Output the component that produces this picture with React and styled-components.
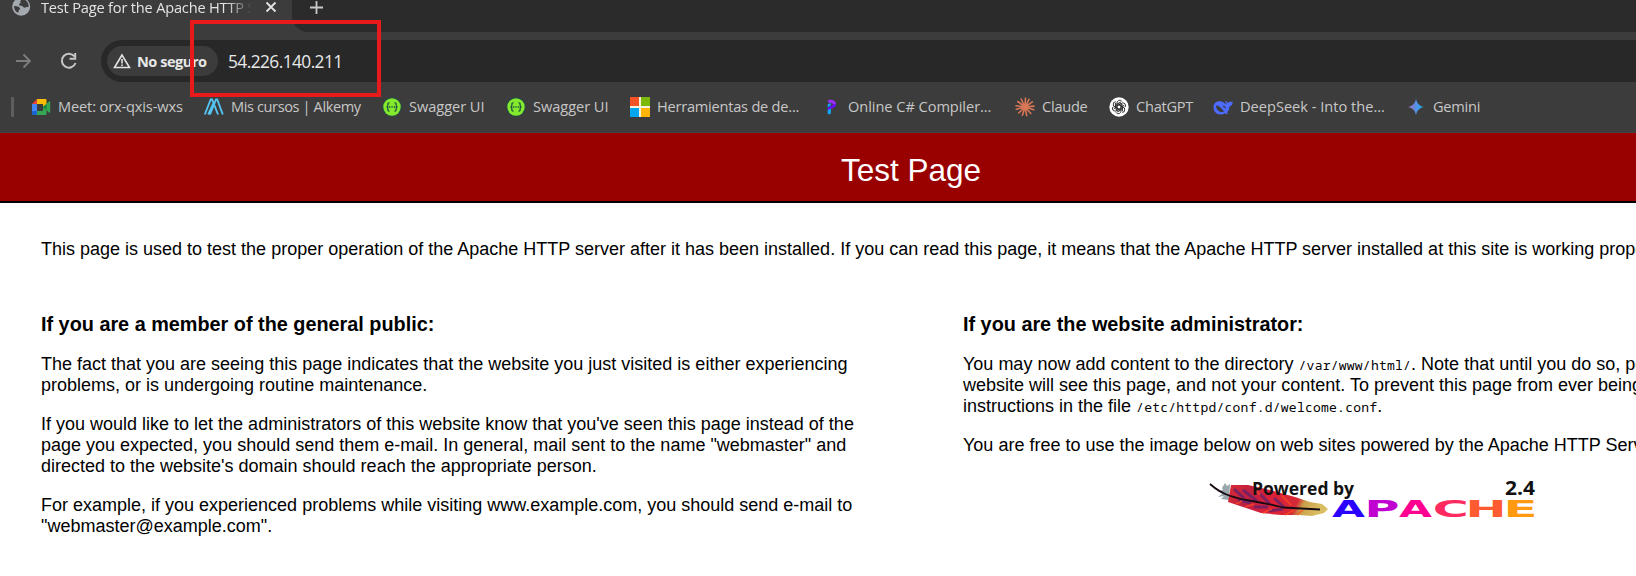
import React from "react";
import styled, { createGlobalStyle } from "styled-components";

const Global = createGlobalStyle`
  * { box-sizing: border-box; }
  html, body { margin: 0; height: 576px; overflow: hidden; background: #fff; }
`;

const Window = styled.div`
  position: relative;
  width: 1636px;
  height: 576px;
  overflow: hidden;
  display: flex;
  flex-direction: column;
  font-family: "Open Sans", "Noto Sans", sans-serif;
`;

const TabStrip = styled.div`
  flex: none;
  display: flex;
  height: 32px;
  background: #3c3c3c;
`;

const Tab = styled.div`
  width: 292px;
  height: 32px;
  padding: 0 13px 0 12px;
  display: flex;
  background: #3c3c3c;
  color: #e3e3e3;
`;

const TabIcon = styled.span`
  width: 29px;
  margin-top: -3px;
  svg { display: block; }
`;

const TabTitle = styled.span`
  width: 224px;
  overflow: hidden;
  white-space: nowrap;
  font-size: 14.6px;
  line-height: 20px;
  margin-top: -3px;
  letter-spacing: ${(p) => p.$spacing}px;
  -webkit-mask-image: linear-gradient(90deg, #000 186px, transparent 211px);
  mask-image: linear-gradient(90deg, #000 186px, transparent 211px);
`;

const TabRest = styled.div`
  flex: 1;
  height: 32px;
  padding-left: 18px;
  background: #2b2b2b;
  border-bottom-left-radius: 16px;
  svg { display: block; }
`;

const Toolbar = styled.div`
  flex: none;
  height: 50px;
  padding: 8px 0 0 14px;
  display: flex;
  background: #3c3c3c;
`;

const NavButton = styled.span`
  width: ${(p) => p.$w}px;
  height: 42px;
  display: flex;
  align-items: center;
`;

const AddressBar = styled.div`
  flex: 1;
  height: 42px;
  padding-left: 6px;
  display: flex;
  align-items: center;
  background: #282828;
  border-radius: 21px 0 0 21px;
`;

const SecurityChip = styled.span`
  width: 111px;
  height: 30px;
  padding-left: 6px;
  display: flex;
  align-items: center;
  gap: 6px;
  border-radius: 15px;
  background: #3c3c3c;
  color: #e8e8e8;
  font-weight: 700;
  font-size: 14.5px;
  white-space: nowrap;
  letter-spacing: -0.45px;
`;

const Url = styled.span`
  margin-left: 10px;
  color: #e8e8e8;
  font-size: 17.3px;
  letter-spacing: -0.55px;
`;

const BookmarkBar = styled.div`
  flex: none;
  height: 51px;
  display: flex;
  align-items: flex-start;
  padding: 15px 0 0 11px;
  background: #3c3c3c;
  border-bottom: 1px solid #444;
`;

const Divider = styled.span`
  width: 3px;
  height: 20px;
  margin-right: 17px;
  border-radius: 1px;
  background: #5e5e5e;
`;

const Bookmark = styled.span`
  flex: none;
  width: ${(p) => p.$w}px;
  height: 20px;
  display: flex;
  align-items: center;
  gap: 7px;
  color: #c7c7c7;
  font-size: 14.6px;
  line-height: 20px;
  letter-spacing: ${(p) => p.$spacing}px;
  white-space: nowrap;
  svg { flex: none; }
`;

const BookmarkLabel = styled.span`
  padding-bottom: 2px;
`;

const Banner = styled.header`
  flex: none;
  height: 70px;
  width: 1822px;
  background: #990000;
  border-bottom: 2px solid #000;
  text-align: center;
`;

const BannerTitle = styled.h1`
  margin: 0;
  padding-top: 19px;
  color: #fff;
  font: 400 31.5px/36px "Liberation Sans", Arial, sans-serif;
`;

const Content = styled.main`
  flex: none;
  width: 1822px;
  padding: 36px 0 0 41px;
  color: #000;
  font: 18px/21px "Liberation Sans", Arial, sans-serif;
`;

const Intro = styled.p`
  margin: 0;
  white-space: nowrap;
`;

const Columns = styled.div`
  display: flex;
  padding-top: 53px;
`;

const Column = styled.section`
  flex: none;
  width: ${(p) => p.$w}px;
`;

const ColumnTitle = styled.h2`
  margin: 0 0 18px;
  font-size: 19.83px;
  line-height: 23px;
  font-weight: 700;
`;

const Paragraph = styled.p`
  margin: 0 0 18px;
  white-space: nowrap;
`;

const Path = styled.code`
  font: 13px/18px "Noto Sans Mono", "DejaVu Sans Mono", monospace;
  letter-spacing: 0.24px;
`;

const Logo = styled.svg`
  display: block;
  margin: 0 0 0 227px;
`;

const Highlight = styled.div`
  position: absolute;
  left: 190px;
  top: 20px;
  width: 191px;
  height: 77px;
  border: 4px solid #e81a1c;
`;

const GlobeIcon = () => (
  <svg width="19" height="19" viewBox="0 0 19 19">
    <circle cx="9.2" cy="9.7" r="9" fill="#a4a9af" />
    <path d="M11.5 2.2c-2.2.3-3.8 1.4-3 3.2.4 1-1.2 1-1.5 2.2-.3 1 1.400 1.400 2.700 1.400 1.500 0 1.500 1.800 3 1.800 1.200 0 1.700-1 3.800-.6A7.300 7.300 0 0 0 11.500 2.200zM2 9c1.500-.3 5.500.3 6 2.300.3 1.400-1.600 1.300-1.400 3 .1 1-.7 1.600-1.700 1A7.500 7.500 0 0 1 2 9z" fill="#3c3c3c" />
  </svg>
);

const MeetIcon = () => (
  <svg width="20" height="20" viewBox="0 0 20 20">
    <path d="M1 7l5-5v5z" fill="#ea4335" />
    <path d="M6 2h8.500a1 1 0 0 1 1 1v4.500L12 10V7H6z" fill="#fbbc04" />
    <path d="M1 7h5v7H1z" fill="#4285f4" />
    <path d="M1 14h5v4H2.500A1.500 1.500 0 0 1 1 16.500z" fill="#1967d2" />
    <path d="M6 14h6v-4l3.500 2.500V17a1 1 0 0 1-1 1H6z" fill="#34a853" />
    <path d="M12 10l6-5.500c.6-.4 1.200-.2 1.200.5v10c0 .7-.6.900-1.200.5z" fill="#34a853" />
    <path d="M12 10l3.500-3v6z" fill="#188038" />
  </svg>
);

const AlkemyIcon = () => (
  <svg width="20" height="20" viewBox="0 0 20 20" fill="none" stroke="#55c3f0" strokeWidth="1.900">
    <path d="M.8 17.500L6.700 2.500h1.400L14 17.500M6 17.500L12 2.500h1.200l5.600 15M4.200 17.500L10 5" />
  </svg>
);

const SwaggerIcon = () => (
  <svg width="20" height="20" viewBox="0 0 20 20">
    <circle cx="10" cy="10" r="9.700" fill="#234b48" />
    <circle cx="10" cy="10" r="8.700" fill="#83ea2c" />
    <path d="M7.500 5.800C5.700 5.600 5.900 6.800 5.900 8c0 1.300-.4 1.900-1.300 2 .9.100 1.300.7 1.300 2 0 1.200-.2 2.400 1.600 2.200M12.500 5.800c1.800-.2 1.600 1 1.600 2.200 0 1.300.4 1.900 1.300 2-.9.100-1.300.7-1.300 2 0 1.200.2 2.400-1.600 2.200" fill="none" stroke="#205044" strokeWidth="1.300" />
    <path d="M7 10h1.300M9.400 10h1.300M11.800 10h1.300" stroke="#205044" strokeWidth="1.300" />
  </svg>
);

const MicrosoftIcon = () => (
  <svg width="20" height="20" viewBox="0 0 20 20">
    <path d="M0 0h20v20H0z" fill="#f4f1dc" />
    <path d="M0 0h9v9H0z" fill="#f35325" />
    <path d="M11 0h9v9h-9z" fill="#7cb90a" />
    <path d="M0 11h9v9H0z" fill="#05a6f0" />
    <path d="M11 11h9v9h-9z" fill="#ffb508" />
  </svg>
);

const CompilerIcon = () => (
  <svg width="20" height="20" viewBox="0 0 20 20">
    <path d="M6.700 7.200l3-1.200v2.500l-3 2z" fill="#12a5f4" />
    <path d="M6.700 12.200l3.200-1.800v5.500c0 .9-.7 1.400-1.600 1.400H6.700z" fill="#12a5f4" />
    <path d="M7.200 3c3.500-.6 7.800.6 7.800 4l-2.600 1c-.4-2-2.600-2.600-5.200-2.200z" fill="#9a2cff" />
    <path d="M15 7c0 3-2.600 4.300-5.100 4.600l-3.200 1.600v-2.100l5.700-3.600z" fill="#6a0cff" />
  </svg>
);

const ClaudeIcon = () => (
  <svg width="20" height="20" viewBox="0 0 20 20" stroke="#d97757" strokeWidth="1.600" strokeLinecap="round">
    <path d="M10 10L10.500 1M10 10l4-7.700M10 10l7.300-5.200M10 10l9-.9M10 10l8.700 2.800M10 10l5.800 6.500M10 10l1.700 8.700M10 10l-2.600 8.300M10 10l-6.300 6M10 10l-8.700 2.200M10 10L1 8.800M10 10L2.800 4.500M10 10L6.200 2" />
  </svg>
);

const ChatGptIcon = () => (
  <svg width="20" height="20" viewBox="0 0 20 20" fill="none" stroke="#202020" strokeWidth="0.900">
    <circle cx="10" cy="10" r="9.700" fill="#fff" stroke="none" />
    {[0, 60, 120, 180, 240, 300].map((a) => (
      <path key={a} transform={`rotate(${a} 10 10)`} d="M8 11.200V6.200c0-3.100 3.700-3.800 5-1.700M8 8.700l3.300-1.900 4 2.300" />
    ))}
  </svg>
);

const DeepSeekIcon = () => (
  <svg width="20" height="20" viewBox="0 0 20 20">
    <path d="M19.700 4.300c-1 .7-1.600.6-2.400.5-1.600-.1-2.100 1.100-2.800 1-.9-.4-.8-2-2.100-2.300.2 1.100-.2 1.800.6 2.800l1 1c-1.600-.2-3-1.800-4.800-2.600C4.700 3.400.5 5.500.5 10.300c0 4.200 3.100 7.200 7.200 7.200 1.700 0 3-.4 4.200-1.200 1 .6 2 .9 3.100.6.300-.3-.5-.7-1-1.200 1.400-1.500 2.500-3.600 2.500-6.100 1.800-.4 3.300-2.100 3.200-5.300z" fill="#4d6bfe" />
    <path d="M3 8.500c3.200-.2 5.600 3 8 6-3.300 1.700-8-.7-8-6zM9.500 9.200c1.500-1.200 3.500.3 3.400 2.700-1-.7-1.400-1.700-3.400-2.700z" fill="#3c3c3c" />
  </svg>
);

const GeminiIcon = () => (
  <svg width="20" height="20" viewBox="0 0 20 20">
    <defs>
      <linearGradient id="gem" x1="0" y1="0" x2="1" y2="0">
        <stop offset="0" stopColor="#a575b8" />
        <stop offset=".35" stopColor="#6f83d6" />
        <stop offset=".65" stopColor="#3e9ff0" />
        <stop offset="1" stopColor="#2696b8" />
      </linearGradient>
    </defs>
    <path d="M10 1.500c.7 4.900 3.500 7.800 8.500 8.500-5 .7-7.800 3.500-8.500 8.500-.7-5-3.500-7.800-8.500-8.500 5-.7 7.800-3.600 8.500-8.500z" fill="url(#gem)" />
  </svg>
);

const bookmarks = [
  [MeetIcon, "Meet: orx-qxis-wxs", 173, -0.14],
  [AlkemyIcon, "Mis cursos | Alkemy", 178, -0.4],
  [SwaggerIcon, "Swagger UI", 124, -0.05],
  [SwaggerIcon, "Swagger UI", 124, -0.05],
  [MicrosoftIcon, "Herramientas de de...", 191, -0.23],
  [CompilerIcon, "Online C# Compiler...", 194, -0.05],
  [ClaudeIcon, "Claude", 94, -0.25],
  [ChatGptIcon, "ChatGPT", 104, -0.25],
  [DeepSeekIcon, "DeepSeek - Into the...", 193, 0],
  [GeminiIcon, "Gemini", 90, -0.25],
];

const letters = [
  ["A", 142, 33, "#2a00ff"],
  ["P", 174.6, 35, "#c000d0"],
  ["A", 209, 33, "#ff0090"],
  ["C", 242.7, 36, "#ff2a60"],
  ["H", 275.5, 41, "#ff5a30"],
  ["E", 313.4, 34, "#ff9a10"],
];

const ApacheLogo = () => (
  <Logo width="350" height="56" viewBox="0 0 350 56">
    <defs>
      <linearGradient id="plume" x1="0" y1="0" x2="1" y2=".15">
        <stop offset="0" stopColor="#d92a32" />
        <stop offset=".25" stopColor="#c02042" />
        <stop offset=".5" stopColor="#dc2038" />
        <stop offset=".76" stopColor="#d52a36" />
        <stop offset=".83" stopColor="#c9a04a" />
        <stop offset="1" stopColor="#d9bd62" />
      </linearGradient>
    </defs>
    <path d="M32 14l3-5 2 3 3-2-1 16-8-1 3-3-6 1 5-4-6-2 6-1z" fill="#9aa7ae" />
    <path d="M41 11l17 0 22 5 25 7 15 5 12 2 6 5-4 4-12 3-13-1-18 0-20-2-18-6-15-5z" fill="url(#plume)" />
    <path d="M44 15l10 9M53 16l14 11M70 20l10 10M48 26l13 3M64 33l14 0M84 24l10 9M78 37l15-2" stroke="#61206c" strokeWidth="3" opacity=".75" />
    <path d="M64 14l6 7M92 22l9 9M46 30l6-3M55 33l9-3M73 39l9-4M95 41l9-5M107 41l6-5" stroke="#ff4a20" strokeWidth="1.500" opacity=".8" />
    <path d="M20 10q9 8 19 11.500T62 27t31 6.500l37 2" fill="none" stroke="#160b12" strokeWidth="1.800" />
    <text x="62" y="20.500" textLength="102" lengthAdjust="spacingAndGlyphs" fontFamily="Open Sans" fontWeight="700" fontSize="17.500" fill="#111">Powered by</text>
    <text x="315" y="20.500" textLength="30" lengthAdjust="spacingAndGlyphs" fontFamily="Open Sans" fontWeight="700" fontSize="19" fill="#111">2.4</text>
    {letters.map(([ch, x, w, fill]) => (
      <text key={x} x={x} y="42.500" textLength={w} lengthAdjust="spacingAndGlyphs" fontFamily="DejaVu Sans" fontWeight="700" fontSize="23" fill={fill}>{ch}</text>
    ))}
  </Logo>
);

export default function App() {
  return (
    <Window>
      <Global />
      <TabStrip>
        <Tab>
          <TabIcon><GlobeIcon /></TabIcon>
          <TabTitle $spacing={-0.19}>Test Page for the Apache HTTP Server</TabTitle>
          <svg width="13" height="16" viewBox="0 0 13 16" stroke="#e3e3e3" strokeWidth="1.800">
            <path d="M1.500 2.500l9 9M10.500 2.500l-9 9" />
          </svg>
        </Tab>
        <TabRest>
          <svg width="14" height="15" viewBox="0 0 14 15" stroke="#c9c9c9" strokeWidth="1.800">
            <path d="M0 7.500h13M6.500 1v13" />
          </svg>
        </TabRest>
      </TabStrip>
      <Toolbar>
        <NavButton $w={45}>
          <svg width="18" height="18" viewBox="0 0 18 18" fill="none" stroke="#7d7d7d" strokeWidth="1.800">
            <path d="M2 9h14M9.500 2.500L16 9l-6.500 6.500" />
          </svg>
        </NavButton>
        <NavButton $w={42}>
          <svg width="20" height="20" viewBox="0 0 20 20" fill="none" stroke="#c7c7c7" strokeWidth="2">
            <path d="M15.500 5.500A7 7 0 1 0 16.500 12M16.200 2v5.700h-5.700" />
          </svg>
        </NavButton>
        <AddressBar>
          <SecurityChip>
            <svg width="18" height="16" viewBox="0 0 18 16" fill="none" stroke="#e3e3e3" strokeWidth="1.600">
              <path d="M9 2L1.500 14.500h15zM9 6v4.500M9 11.500v1.600" />
            </svg>
            No seguro
          </SecurityChip>
          <Url>54.226.140.211</Url>
        </AddressBar>
      </Toolbar>
      <BookmarkBar>
        <Divider />
        {bookmarks.map(([Icon, label, w, spacing], i) => (
          <Bookmark key={i} $w={w} $spacing={spacing}>
            <Icon />
            <BookmarkLabel>{label}</BookmarkLabel>
          </Bookmark>
        ))}
      </BookmarkBar>
      <Banner>
        <BannerTitle>Test Page</BannerTitle>
      </Banner>
      <Content>
        <Intro>
          This page is used to test the proper operation of the Apache HTTP server after it has been installed. If you can read this page, it means that the Apache HTTP server installed at this site is working properly.
        </Intro>
        <Columns>
          <Column $w={922}>
            <ColumnTitle>If you are a member of the general public:</ColumnTitle>
            <Paragraph>
              The fact that you are seeing this page indicates that the website you just visited is either experiencing
              <br />
              problems, or is undergoing routine maintenance.
            </Paragraph>
            <Paragraph>
              If you would like to let the administrators of this website know that you've seen this page instead of the
              <br />
              page you expected, you should send them e-mail. In general, mail sent to the name "webmaster" and
              <br />
              directed to the website's domain should reach the appropriate person.
            </Paragraph>
            <Paragraph>
              For example, if you experienced problems while visiting www.example.com, you should send e-mail to
              <br />
              "webmaster@example.com".
            </Paragraph>
          </Column>
          <Column $w={860}>
            <ColumnTitle>If you are the website administrator:</ColumnTitle>
            <Paragraph>
              You may now add content to the directory <Path>/var/www/html/</Path>. Note that until you do so, people visiting your
              <br />
              website will see this page, and not your content. To prevent this page from ever being used, follow the
              <br />
              instructions in the file <Path>/etc/httpd/conf.d/welcome.conf</Path>.
            </Paragraph>
            <Paragraph>You are free to use the image below on web sites powered by the Apache HTTP Server:</Paragraph>
            <ApacheLogo />
          </Column>
        </Columns>
      </Content>
      <Highlight />
    </Window>
  );
}
